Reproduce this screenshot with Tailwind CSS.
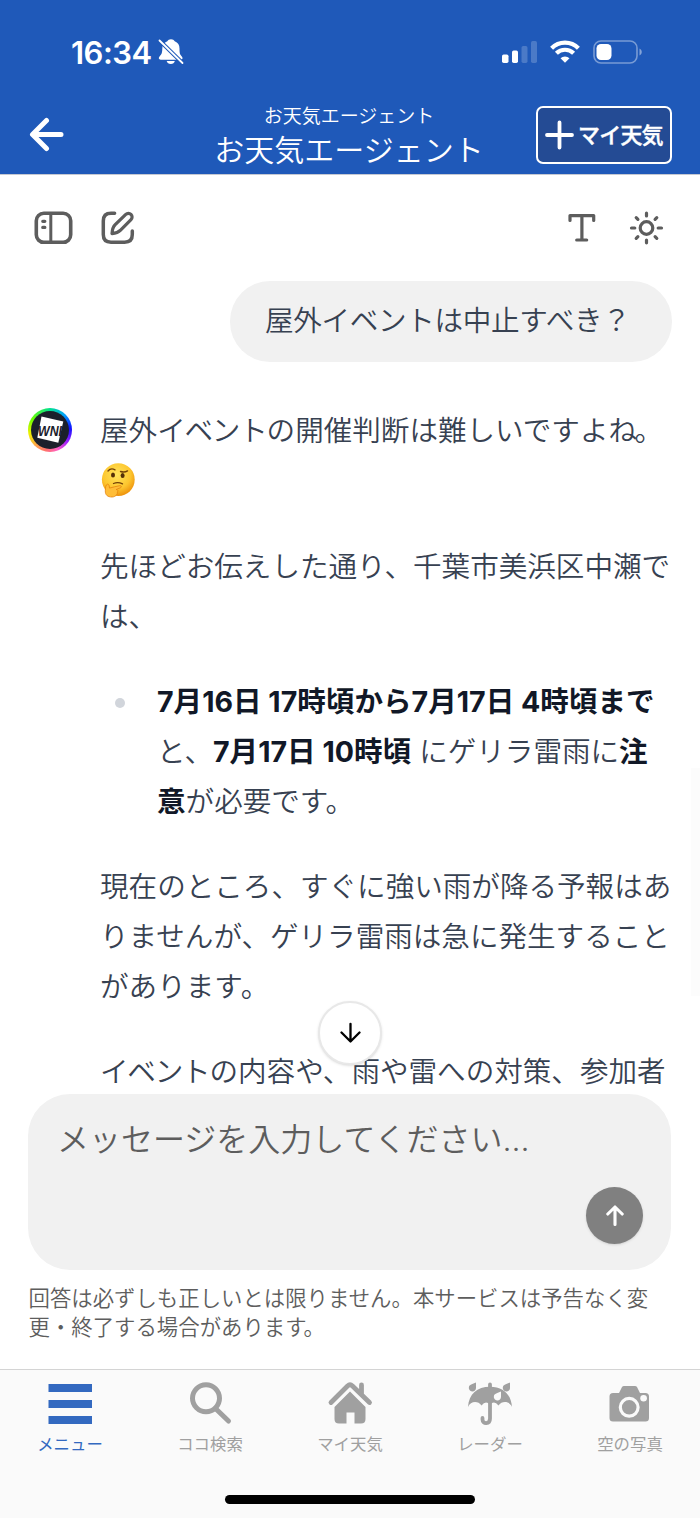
<!DOCTYPE html>
<html lang="ja">
<head>
<meta charset="utf-8">
<title>お天気エージェント</title>
<script src="https://cdn.jsdelivr.net/npm/@tailwindcss/browser@4"></script>
</head>
<body class="w-[700px] h-[1518px] overflow-hidden bg-white font-['Inter','Noto_Sans_CJK_JP',sans-serif]">
<div class="relative flex h-[1518px] w-[700px] flex-col overflow-hidden">

  <!-- Header -->
  <header class="h-[175px] shrink-0 border-b border-[#c4c8d2] bg-[#1f59b9] text-white">
    <div class="flex h-[104px] items-center pl-[71px] pr-[58px]">
      <span class="w-[81px] text-[31px] font-semibold leading-none tracking-[-0.5px]">16:34</span>
      <svg class="ml-[6px]" width="26" height="28" viewBox="0 0 26 28" fill="#fff">
        <path d="M13 1.200c-1.800 0-3 .8-3.700 2C6 4.500 4.300 7 4.300 10.500c0 4-.6 5.800-2.600 7.800-1.500 1.500-1.100 3.400 1 3.400h20.100c2.100 0 2.300-1.900.8-3.400-2-2-2.100-3.800-2.100-7.800 0-3.500-1.500-6-4.800-7.300C16 2 14.800 1.200 13 1.200z"/>
        <path d="M8.700 23h8.100c-.4 1.900-1.900 3-4 3s-3.700-1.100-4.100-3z"/>
        <path d="M0 1L26 26.500" stroke="#1f59b9" stroke-width="4"/>
        <path d="M1.500 2.500L24.500 25" stroke="#fff" stroke-width="1.800" stroke-linecap="round"/>
      </svg>
      <div class="ml-auto flex items-center">
        <svg width="36" height="24" viewBox="0 0 36 24" fill="#fff">
          <rect x="0" y="14.500" width="6.500" height="8.500" rx="1.700"/>
          <rect x="10" y="10.500" width="6" height="12.500" rx="1.700"/>
          <rect x="19.500" y="6" width="6" height="17" rx="1.700" opacity=".2"/>
          <rect x="29" y="1" width="6" height="22" rx="1.700" opacity=".2"/>
        </svg>
        <svg class="ml-[12px]" width="30" height="24" viewBox="0 0 30 24" fill="none" stroke="#fff" stroke-width="4.200">
          <path d="M1.600 8.200a19 19 0 0 1 26.800 0"/>
          <path d="M6.400 13.300a12.200 12.200 0 0 1 17.200 0"/>
          <path d="M15 22.800l-4.500-4.500a6.400 6.400 0 0 1 9 0z" fill="#fff" stroke="none"/>
        </svg>
        <svg class="ml-[13px]" width="49" height="24" viewBox="0 0 49 24">
          <rect x="1" y="1" width="43" height="22" rx="7" fill="none" stroke="#fff" stroke-width="1.600" opacity=".4"/>
          <rect x="3.500" y="4" width="15" height="16" rx="4.500" fill="#fff"/>
          <path d="M46.500 8.500c3 1.800 3 5.200 0 7z" fill="#fff" opacity=".45"/>
        </svg>
      </div>
    </div>
    <div class="grid grid-cols-[185px_1fr_185px]">
      <div class="pl-[29px] pt-[13px]">
        <svg width="36" height="36" viewBox="0 0 36 36" fill="none" stroke="#fff" stroke-width="5" stroke-linecap="round" stroke-linejoin="round"><path d="M32 17.500H4M17.500 3.500L3.500 17.500l14 14"/></svg>
      </div>
      <div class="flex flex-col items-center whitespace-nowrap pr-[2px] pt-px font-[350]">
        <div class="text-[19px] leading-[24px]">お天気エージェント</div>
        <div class="text-[30px] leading-[42px]">お天気エージェント</div>
      </div>
      <div class="pl-[21px] pt-[2px]">
        <div class="flex h-[58px] w-[136px] items-center whitespace-nowrap rounded-[7px] border-2 border-white bg-[#244b94] pl-[7px] text-[22px] font-medium tracking-[-0.8px] [-webkit-text-stroke:0.4px_white]">
          <svg class="mr-[4px] shrink-0" width="29" height="30" viewBox="0 0 29 30" stroke="#fff" stroke-width="3.800" stroke-linecap="round"><path d="M2 15h25M14.500 2.500v25"/></svg>マイ天気
        </div>
      </div>
    </div>
  </header>

  <!-- Conversation -->
  <main class="relative h-[919px] shrink-0 overflow-hidden">
    <div class="flex h-[106px] items-center pb-px pl-[34px] pr-[36px] text-[#5d5d5d]">
      <svg width="39" height="34" viewBox="0 0 39 34" fill="none" stroke="currentColor" stroke-width="3.600" stroke-linecap="round">
        <rect x="2.300" y="2.300" width="34.400" height="29" rx="7.500"/><path d="M16.800 2.500v28.500" stroke-width="3"/><path d="M8.800 10.300h2M8.800 16.400h2" stroke-width="3.300"/>
      </svg>
      <svg class="ml-[28px]" width="34" height="34" viewBox="0 0 34 34" fill="none" stroke="currentColor" stroke-width="3.500" stroke-linecap="round" stroke-linejoin="round">
        <path d="M13.600 2.200H10c-5 0-7.700 2.700-7.700 7.700v13.600c0 5 2.700 7.700 7.700 7.700h13.600c5 0 7.700-2.700 7.700-7.700V20"/>
        <path d="M11 22.600c.2-4 .9-6.600 3.200-8.900L24.800 3.400a3.600 3.600 0 0 1 5.200 5.200L19.600 19.100c-2.300 2.300-4.600 3.100-8.600 3.500z" stroke-width="3.200"/>
      </svg>
      <svg class="ml-auto" width="28" height="30" viewBox="0 0 28 30" fill="none" stroke="currentColor" stroke-width="3.200" stroke-linecap="round" stroke-linejoin="round"><path d="M2 7.500V2.600h23.700v4.900M13.900 3v24M8.700 27h10"/></svg>
      <svg class="ml-[33px]" width="35" height="34" viewBox="0 0 35 34" fill="none" stroke="currentColor" stroke-width="3.200" stroke-linecap="round"><circle cx="17.500" cy="17" r="6.300"/><path d="M17.500 2.200v2.800M17.500 29v2.800M2.500 17h3.300M29.200 17h3.300M7.200 6.700l1.700 1.700M26.100 25.600l1.700 1.700M27.800 6.700l-1.700 1.700M8.900 25.600l-1.700 1.700"/></svg>
    </div>

    <div class="ml-[230px] flex h-[81px] w-[441.500px] items-center whitespace-nowrap rounded-[40px] bg-[#f1f1f1] pb-px pl-[35px] text-[28.57px] font-[350] tracking-[-0.3px] text-[#374151]">屋外イベントは中止すべき？</div>

    <div class="flex pt-[42px]">
      <div class="ml-[28px] mt-[4px] flex size-[44px] shrink-0 items-center justify-center rounded-full bg-[conic-gradient(#00e090,#00a0ff_45deg,#1010ff_85deg,#a020ff_125deg,#ff60c0_160deg,#ff7070_190deg,#ffa050_220deg,#f0f000_260deg,#70ff00_300deg,#00e090)]">
        <svg width="38" height="38" viewBox="0 0 38 38"><circle cx="19" cy="19" r="19" fill="#1b202b"/><path d="M10.500 5.500L32.300 10.500 27.300 31.700 6.300 26.700z" fill="#fff"/><text x="7" y="24.700" textLength="24" lengthAdjust="spacingAndGlyphs" font-family="Liberation Sans" font-size="14" font-weight="700" font-style="italic" fill="#1b202b">WNI</text></svg>
      </div>
      <div class="ml-[28px] mt-[2px] w-[590px] shrink-0 whitespace-nowrap text-[28.57px] font-[350] leading-[50px] text-[#374151]">
        <p>屋外<span class="tracking-[-1.2px]">イベント</span>の開催判断は難しいですよ<span class="tracking-[-2.5px]">ね</span>。</p>
        <div class="flex h-[50px] items-center pb-[2px]">
          <svg width="36" height="36" viewBox="0 0 36 36">
            <defs><radialGradient id="face" cx=".45" cy=".35" r=".65"><stop offset="0" stop-color="#ffe45c"/><stop offset=".65" stop-color="#fdc62f"/><stop offset="1" stop-color="#ee930d"/></radialGradient></defs>
            <circle cx="18.300" cy="17.600" r="16.400" fill="url(#face)"/>
            <ellipse cx="13" cy="13" rx="2" ry="2.500" fill="#553008"/><ellipse cx="22.600" cy="13.500" rx="2" ry="2.500" fill="#553008"/>
            <path d="M8 9c1.700-2 4.500-2.600 7-1.200M20.500 9.500c2.500.8 5 .7 7-.6" fill="none" stroke="#734107" stroke-width="1.400" stroke-linecap="round"/>
            <path d="M13.500 21.500c3-1.200 6.300-.9 9 .4" fill="none" stroke="#734107" stroke-width="1.300" stroke-linecap="round"/>
            <path d="M7.200 22.300c1.300-.5 2 .5 2.300 3.800 3.400-.8 7-2 10.200-2.400 2-.2 2.200 1.600.5 2.200l-4 1.600c2 .3 2.200 1.700 1 2.500 1 1.600-1.500 5-5.200 5-4.600 0-6.800-2.100-6.700-6.200.1-2.500.3-6 1.900-6.500z" fill="#ffbd38" stroke="#e5830c" stroke-width=".8"/>
          </svg>
        </div>
        <p class="mt-[35.500px]">先ほどお伝えした通り、千葉市美浜区中瀬で<br>は、</p>
        <ul class="mt-[35.500px]">
          <li class="flex"><span class="ml-[15px] mt-[21px] size-[10px] shrink-0 rounded-full bg-[#d1d5db]"></span>
            <div class="ml-[32px] [&_b]:font-bold [&_b]:text-[#111827]"><b>7月16日 17時頃から7月17日 4時頃まで</b><br>と、<b>7月17日 10時頃</b> にゲリラ雷雨に<b>注<br>意</b>が必要です。</div></li>
        </ul>
        <p class="mt-[35px]">現在のところ、すぐに強い雨が降る予報はあ<br>りませんが、ゲリラ雷雨は急に発生すること<br>がありま<span class="tracking-[-2px]">す</span>。</p>
        <p class="mt-[35px]"><span class="tracking-[-1.200px]">イベント</span>の内容や、雨や雷への対策、参加者</p>
      </div>
    </div>
    <div class="absolute right-0 top-[593px] h-[228px] w-[9px] bg-[#fcfcfc]"></div>
    <div class="absolute left-[318px] top-[826px] flex size-[64px] items-center justify-center rounded-full border-2 border-[#e8e8e8] bg-white shadow-sm">
      <svg width="22" height="22" viewBox="0 0 22 22" fill="none" stroke="#000" stroke-width="2.300" stroke-linecap="round" stroke-linejoin="round"><path d="M11.500 1.800v17.500M2.500 10.500l9 9 9-9"/></svg>
    </div>
  </main>

  <!-- Message input -->
  <section class="mx-[28px] flex h-[176px] w-[643px] shrink-0 flex-col rounded-[42px] bg-[#f1f1f1] pl-[29px] pr-[28px] pt-[21px]">
    <div class="text-[32px] font-[350] leading-[50px] text-[#5d5d5d]">メッセージを入力してください...</div>
    <div class="ml-auto mt-[22px] flex size-[57px] items-center justify-center rounded-full bg-[#808080] shadow-sm">
      <svg width="20" height="22" viewBox="0 0 20 22" fill="none" stroke="#fff" stroke-width="3.100" stroke-linecap="round" stroke-linejoin="round"><path d="M10 19.500V2.500M2.800 9L10 2l7.200 7"/></svg>
    </div>
  </section>
  <p class="ml-[28.500px] mt-[14px] h-[85px] shrink-0 whitespace-nowrap text-[21.400px] font-[350] leading-[29px] text-[#5d5d5d]">回答は必ずしも正しいとは限りません。本サービスは予告なく変<br>更・終了する場合がありま<span class="tracking-[-3px]">す</span>。</p>

  <!-- Tab bar -->
  <nav class="grid h-[149px] shrink-0 grid-cols-5 border-t border-[#d4d4d4] bg-[#fafafa] text-[16.400px] text-[#a0a0a0]">
    <div class="flex flex-col items-center pt-[10px] text-[#3369c0]">
      <svg width="48" height="48" viewBox="0 0 48 48" fill="currentColor"><path d="M2.500 4h43.500v8H2.500zM2.500 20h43.500v8H2.500zM2.500 36h43.500v8H2.500z"/></svg>
      <span class="mt-[4px] leading-[24px]">メニュー</span>
    </div>
    <div class="flex flex-col items-center pt-[10px]">
      <svg width="48" height="48" viewBox="0 0 48 48" fill="none" stroke="currentColor" stroke-width="5"><circle cx="20" cy="18.300" r="13.500"/><path d="M29.500 28.500L42.500 41" stroke-linecap="round"/></svg>
      <span class="mt-[4px] leading-[24px]">ココ検索</span>
    </div>
    <div class="flex flex-col items-center pt-[10px]">
      <svg width="48" height="48" viewBox="0 0 48 48" fill="currentColor"><path d="M24 11.500L8.500 27V39q0 4.500 4.500 4.500h7.500v-11h8v11H35q4.500 0 4.500-4.500V27z"/><path d="M5 22.500L21.500 6q2.500-2.300 5 0L43.500 22.500M35.500 5v10" fill="none" stroke="#fafafa" stroke-width="8"/><path d="M5 22.500L21.500 6q2.500-2.300 5 0L43.500 22.500M35.500 5v9" fill="none" stroke="currentColor" stroke-width="4.800" stroke-linecap="round"/></svg>
      <span class="mt-[4px] leading-[24px]">マイ天気</span>
    </div>
    <div class="flex flex-col items-center pt-[10px]">
      <svg width="48" height="48" viewBox="0 0 48 48" fill="currentColor">
        <path d="M2 27C3 14 11 6.800 24 6.800S45 14 46 27c-2.500-6-10-6.500-13.500-1.500q-4.500-5.500-8.500-.5-4-5-8.500.5C12 20.500 4.500 21 2 27z"/>
        <path d="M24 4.500V38.500c0 6-7.500 6-7.500 1V38" fill="none" stroke="currentColor" stroke-width="3.800" stroke-linecap="round"/>
        <path d="M10 2.500v5.200a3.600 3.600 0 1 1-7.100-.6C3.200 4.500 6.600 4.200 10 2.500z"/><path d="M44 2.500v5.200a3.600 3.600 0 1 1-7.100-.6c.3-2.600 3.700-2.900 7.100-4.600z"/>
        <path d="M35 11.500v5.200a3.600 3.600 0 1 1-7.100-.6c.3-2.600 3.700-2.900 7.100-4.600z" fill="#fafafa"/>
      </svg>
      <span class="mt-[4px] leading-[24px]">レーダー</span>
    </div>
    <div class="flex flex-col items-center pt-[10px]">
      <svg class="-ml-[2px]" width="48" height="48" viewBox="0 0 48 48" fill="currentColor"><path d="M8 13h6l3-6q.7-1 2-1h11q1.300 0 2 1l3 6h5.500q3.500 0 3.500 3.500V38q0 3.500-3.500 3.500H8q-3.500 0-3.500-3.500V16.500Q4.500 13 8 13z"/><circle cx="24.200" cy="27.300" r="8.900" fill="none" stroke="#fafafa" stroke-width="3.200"/><circle cx="38.600" cy="18.200" r="3.300" fill="#fafafa"/></svg>
      <span class="mt-[4px] leading-[24px]">空の写真</span>
    </div>
  </nav>
  <div class="absolute bottom-[14px] left-[225px] h-[9px] w-[250px] rounded-full bg-black"></div>
</div>
</body>
</html>
